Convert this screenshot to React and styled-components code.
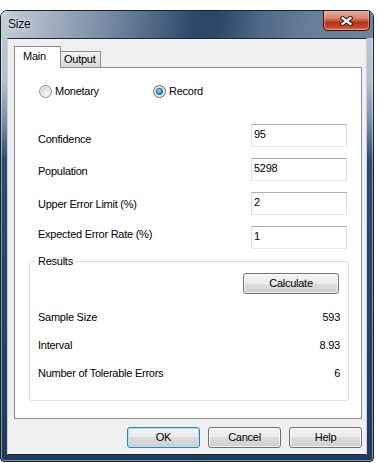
import React from 'react';
import styled, { createGlobalStyle, css } from 'styled-components';

const FONT = `'Liberation Sans', Arial, sans-serif`;

const GlobalStyle = createGlobalStyle`
  html, body {
    margin: 0;
    background: #fff;
  }
  body {
    font-family: ${FONT};
    font-size: 11px;
    line-height: 13px;
    letter-spacing: -0.25px;
    color: #000;
  }
`;

const Page = styled.div`
  padding-top: 10px;
`;

const Window = styled.div`
  box-sizing: border-box;
  width: 374px;
  height: 452px;
  display: flex;
  flex-direction: column;
  padding: 0 6px 6px;
  border: 1px solid #18222f;
  border-radius: 7px 7px 4px 4px;
  background: linear-gradient(
    180deg,
    #c0cad5 0px,
    #b3bfcc 70px,
    #7b8fa8 110px,
    #2d4a6f 150px,
    #203b5e 100%
  );
  box-shadow: inset 0 0 0 1px rgba(255, 255, 255, 0.45);
`;

const TitleBar = styled.div`
  display: flex;
  align-items: flex-start;
  height: 27px;
  margin: 0 -6px;
  padding: 0 3px 0 7px;
  border-radius: 6px 6px 0 0;
  background: linear-gradient(
    100deg,
    #c6d0da 0%,
    #a6b4c4 12%,
    #7a8da5 28%,
    #4d6585 42%,
    #2c4769 52%,
    #2c4668 58%,
    #51698a 70%,
    #687d97 82%,
    #6e829b 100%
  );
`;

const Title = styled.span`
  font-size: 12px;
  line-height: 27px;
  color: #111;
  text-shadow: 0 0 6px rgba(255, 255, 255, 0.9);
`;

const CloseButton = styled.div`
  box-sizing: border-box;
  width: 47px;
  height: 20px;
  margin-left: auto;
  display: flex;
  align-items: center;
  justify-content: center;
  border: 1px solid #3d130d;
  border-top: none;
  border-radius: 0 0 5px 5px;
  background: linear-gradient(
    180deg,
    #e6a695 0%,
    #d88a76 35%,
    #c75a42 50%,
    #b8321c 60%,
    #c24a2e 85%,
    #d87a57 100%
  );
  box-shadow: inset 0 0 0 1px rgba(255, 200, 180, 0.45);
`;

const Client = styled.div`
  flex: 1;
  display: flex;
  flex-direction: column;
  padding: 7px 4px 6px 6px;
  background: #f0f0f0;
  border: 1px solid #c9d1da;
  border-top-color: #1d2b3c;
  border-bottom-color: #1d2b3c;
`;

const TabStrip = styled.div`
  display: flex;
  align-items: flex-end;
  height: 21px;
`;

const Tab = styled.div`
  box-sizing: border-box;
  border: 1px solid #898c95;
  border-bottom: none;

  ${(p) =>
    p.$active
      ? css`
          position: relative;
          z-index: 1;
          width: 47px;
          height: 22px;
          margin-bottom: -1px;
          padding: 3px 0 0 8px;
          background: #fff;
        `
      : css`
          width: 41px;
          height: 16px;
          margin-left: -1px;
          padding: 1px 0 0 3px;
          background: linear-gradient(180deg, #f2f2f2 0%, #e6e6e6 50%, #d9d9d9 100%);
        `}
`;

const Panel = styled.div`
  flex: 1;
  display: flex;
  flex-direction: column;
  border: 1px solid #898c95;
  background: #fff;
`;

const RadioRow = styled.div`
  display: flex;
  margin-top: 17px;
  padding-left: 24px;
`;

const RadioOption = styled.label`
  display: flex;
  align-items: center;
  gap: 3px;
  width: 114px;
`;

const RadioCircle = styled.span`
  box-sizing: border-box;
  display: flex;
  align-items: center;
  justify-content: center;
  width: 13px;
  height: 13px;
  border-radius: 50%;
  border: 1px solid ${(p) => (p.$checked ? '#56677a' : '#8f8f8f')};
  background: radial-gradient(circle at 62% 68%, #fbfbfb 0, #e6e6e6 40%, #c4c4c4 85%);
  box-shadow: inset 0 0 0 1px #f2f2f2;
`;

const RadioDot = styled.span`
  width: 5px;
  height: 5px;
  border-radius: 50%;
  background: radial-gradient(circle at 40% 35%, #b6e6ff 0, #2b8ed3 55%, #174f86 100%);
  box-shadow: 0 0 0 1px #2c5d8a;
`;

const FormGrid = styled.div`
  display: grid;
  grid-template-columns: 213px 96px;
  grid-auto-rows: 23px;
  row-gap: 11px;
  align-items: start;
  margin-top: 26px;
  padding-left: 23px;
`;

const FieldLabel = styled.span`
  padding-top: ${(p) => p.$offset}px;
`;

const TextBox = styled.input`
  box-sizing: border-box;
  width: 96px;
  height: 23px;
  margin: 0;
  padding: 2px 2px 6px;
  font: 11px/13px ${FONT};
  letter-spacing: -0.25px;
  color: #000;
  background: #fff;
  border: 1px solid #dbdfe6;
  border-top-color: #abadb3;
  border-bottom-color: #e3e9ef;
  outline: none;
`;

const Group = styled.fieldset`
  display: flex;
  flex-direction: column;
  min-width: 0;
  margin: 6px 12px 0 14px;
  padding: 5px 8px 20px 8px;
  border: 1px solid #d5dfe5;
  border-radius: 3px;
`;

const Legend = styled.legend`
  margin-left: -3px;
  padding: 0 3px;
  line-height: 13px;
`;

const ResultList = styled.div`
  display: flex;
  flex-direction: column;
  gap: 15px;
  margin-top: 17px;
`;

const ResultRow = styled.div`
  display: flex;
  justify-content: space-between;
`;

const Button = styled.button`
  box-sizing: border-box;
  width: ${(p) => p.$width || 73}px;
  height: 21px;
  padding: 0;
  font: 11px/13px ${FONT};
  letter-spacing: -0.25px;
  color: #000;
  border: 1px solid #707070;
  border-radius: 3px;
  background: linear-gradient(180deg, #f2f2f2 0%, #ebebeb 50%, #dddddd 50%, #cfcfcf 100%);
  box-shadow: inset 0 0 0 1px rgba(255, 255, 255, 0.75);

  ${(p) =>
    p.$default &&
    css`
      border-color: #3c7fb1;
      box-shadow: inset 0 0 0 1px #a7e1f7;
    `}
`;

const CalcButton = styled(Button)`
  align-self: flex-end;
  margin-right: 1px;
`;

const Footer = styled.div`
  display: flex;
  justify-content: flex-end;
  gap: 8px;
  margin-top: 8px;
`;

const CloseGlyph = () => (
  <svg width="13" height="10" viewBox="0 0 13 10">
    <g strokeLinecap="square">
      <path d="M2.5 2 L10.5 8 M10.5 2 L2.5 8" stroke="#3a1510" strokeWidth="4.2" />
      <path d="M2.5 2 L10.5 8 M10.5 2 L2.5 8" stroke="#fff" strokeWidth="2.2" />
    </g>
  </svg>
);

const Radio = ({ label, checked }) => (
  <RadioOption>
    <RadioCircle $checked={checked}>{checked && <RadioDot />}</RadioCircle>
    {label}
  </RadioOption>
);

const fields = [
  { label: 'Confidence', value: '95', offset: 9 },
  { label: 'Population', value: '5298', offset: 7 },
  { label: 'Upper Error Limit (%)', value: '2', offset: 6 },
  { label: 'Expected Error Rate (%)', value: '1', offset: 2 },
];

const results = [
  { label: 'Sample Size', value: '593' },
  { label: 'Interval', value: '8.93' },
  { label: 'Number of Tolerable Errors', value: '6' },
];

export default function App() {
  return (
    <Page>
      <GlobalStyle />
      <Window>
        <TitleBar>
          <Title>Size</Title>
          <CloseButton>
            <CloseGlyph />
          </CloseButton>
        </TitleBar>
        <Client>
          <TabStrip>
            <Tab $active>Main</Tab>
            <Tab>Output</Tab>
          </TabStrip>
          <Panel>
            <RadioRow>
              <Radio label="Monetary" />
              <Radio label="Record" checked />
            </RadioRow>
            <FormGrid>
              {fields.map((f) => (
                <React.Fragment key={f.label}>
                  <FieldLabel $offset={f.offset}>{f.label}</FieldLabel>
                  <TextBox defaultValue={f.value} />
                </React.Fragment>
              ))}
            </FormGrid>
            <Group>
              <Legend>Results</Legend>
              <CalcButton $width={96}>Calculate</CalcButton>
              <ResultList>
                {results.map((r) => (
                  <ResultRow key={r.label}>
                    <span>{r.label}</span>
                    <span>{r.value}</span>
                  </ResultRow>
                ))}
              </ResultList>
            </Group>
          </Panel>
          <Footer>
            <Button $default>OK</Button>
            <Button>Cancel</Button>
            <Button>Help</Button>
          </Footer>
        </Client>
      </Window>
    </Page>
  );
}
